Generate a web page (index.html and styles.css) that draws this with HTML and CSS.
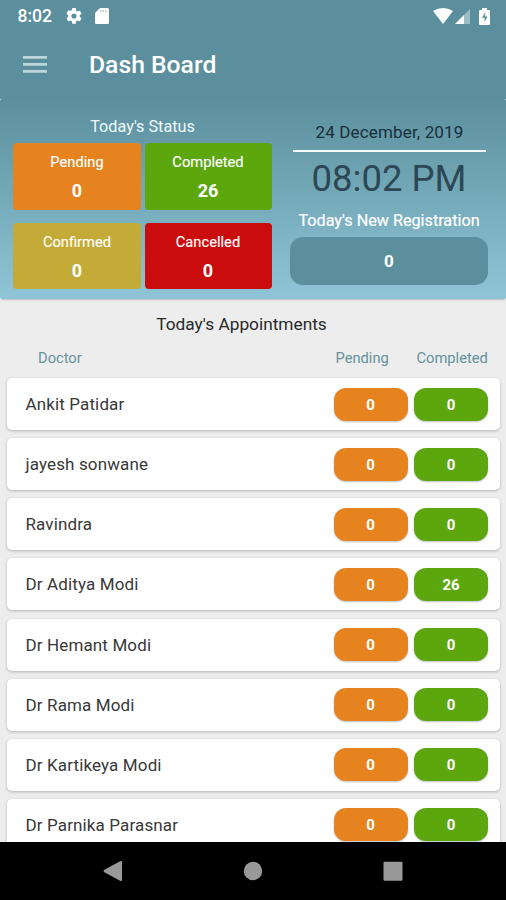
FILE: index.html
```html
<!DOCTYPE html>
<html lang="en">
<head>
<meta charset="utf-8">
<title>Dash Board</title>
<link rel="stylesheet" href="styles.css">
</head>
<body>
<div class="screen">
  <div class="statusbar">
    <span class="clock">8:02</span>
    <svg class="gear" viewBox="2 2 20 20"><path d="M19.14 12.94c.04-.3.06-.61.06-.94s-.02-.64-.07-.94l2.03-1.58a.49.49 0 0 0 .12-.61l-1.92-3.32a.49.49 0 0 0-.59-.22l-2.39.96a7 7 0 0 0-1.62-.94l-.36-2.54A.48.48 0 0 0 13.92 2h-3.84a.48.48 0 0 0-.47.41l-.36 2.54a7 7 0 0 0-1.62.94l-2.39-.96a.49.49 0 0 0-.59.22L2.74 8.87a.48.48 0 0 0 .12.61l2.03 1.58a6 6 0 0 0 0 1.88l-2.03 1.58a.49.49 0 0 0-.12.61l1.92 3.32c.12.22.37.29.59.22l2.39-.96a7 7 0 0 0 1.62.94l.36 2.54c.05.24.24.41.48.41h3.84c.24 0 .44-.17.47-.41l.36-2.54a7 7 0 0 0 1.62-.94l2.39.96c.22.08.47 0 .59-.22l1.92-3.32a.48.48 0 0 0-.12-.61zM12 15.200a3.200 3.200 0 1 1 0-6.400 3.200 3.200 0 0 1 0 6.400z"/></svg>
    <svg class="sd" viewBox="0 0 14 16"><path d="M5 0h7.500Q14 0 14 1.500v13q0 1.500-1.500 1.500h-11Q0 16 0 14.500V5z"/><path class="pins" d="M5 2h1.500v2H5zM7.500 2H9v2H7.500zM10 2h1.500v2H10z"/></svg>
    <div class="system">
      <svg class="wifi" viewBox="0 0 20 16"><path d="M0 3Q10-3 20 3L10 16z"/></svg>
      <svg class="signal" viewBox="0 0 16 16"><path class="faint" d="M16 0v16H0z"/><path d="M9.500 6.500V16H0z"/></svg>
      <svg class="battery" viewBox="0 0 11 17"><path d="M3 0h5v2h2q1 0 1 1v13q0 1-1 1H1q-1 0-1-1V3q0-1 1-1h2z"/><path class="bolt" d="M6.500 4L3 9.800h2.500v4.200l3-5.500H6z"/></svg>
    </div>
  </div>
  <header class="appbar">
    <svg class="menu" viewBox="0 0 24 17"><path d="M0 0h24v2.800H0zM0 7h24v2.800H0zM0 14h24v2.800H0z"/></svg>
    <h1>Dash Board</h1>
  </header>
  <section class="summary">
    <div class="status">
      <h2>Today's Status</h2>
      <div class="tiles">
        <div class="tile orange"><span>Pending</span><b>0</b></div>
        <div class="tile green"><span>Completed</span><b>26</b></div>
        <div class="tile gold"><span>Confirmed</span><b>0</b></div>
        <div class="tile red"><span>Cancelled</span><b>0</b></div>
      </div>
    </div>
    <div class="today">
      <div class="date">24 December, 2019</div>
      <div class="time">08:02 PM</div>
      <div class="reg-title">Today's New Registration</div>
      <div class="reg-count">0</div>
    </div>
  </section>
  <main class="appointments">
    <h2>Today's Appointments</h2>
    <div class="columns"><span class="doctor">Doctor</span><span class="pending">Pending</span><span class="completed">Completed</span></div>
    <div class="list">
      <div class="row"><span class="name">Ankit Patidar</span><b class="pill orange">0</b><b class="pill green">0</b></div>
      <div class="row"><span class="name">jayesh sonwane</span><b class="pill orange">0</b><b class="pill green">0</b></div>
      <div class="row"><span class="name">Ravindra</span><b class="pill orange">0</b><b class="pill green">0</b></div>
      <div class="row"><span class="name">Dr Aditya Modi</span><b class="pill orange">0</b><b class="pill green">26</b></div>
      <div class="row"><span class="name">Dr Hemant Modi</span><b class="pill orange">0</b><b class="pill green">0</b></div>
      <div class="row"><span class="name">Dr Rama Modi</span><b class="pill orange">0</b><b class="pill green">0</b></div>
      <div class="row"><span class="name">Dr Kartikeya Modi</span><b class="pill orange">0</b><b class="pill green">0</b></div>
      <div class="row"><span class="name">Dr Parnika Parasnar</span><b class="pill orange">0</b><b class="pill green">0</b></div>
    </div>
  </main>
  <nav class="navbar">
    <svg viewBox="0 0 20 22"><path d="M17.500 1Q19 .5 19 2v18q0 1.500-1.500 1L1 12q-1-1 0-2z"/></svg>
    <svg viewBox="0 0 20 22"><circle cx="10" cy="11" r="9.200"/></svg>
    <svg viewBox="0 0 20 22"><rect x=".5" y="1.700" width="19" height="19" rx="1.200"/></svg>
  </nav>
</div>
</body>
</html>
```

FILE: styles.css
```css
* { box-sizing: border-box; }
body { margin: 0; font-family: Roboto, sans-serif; }
h1, h2 { margin: 0; }
.screen { width: 506px; height: 900px; display: flex; flex-direction: column; overflow: hidden; background: #ededed; }
svg { display: block; flex: none; }

.statusbar { height: 32px; flex: none; display: flex; align-items: center; padding: 0 16px 0 17.500px; background: #5b8f9d; color: #fff; }
.statusbar svg { fill: #fff; }
.clock { font-size: 17.500px; font-weight: 500; width: 48.500px; line-height: 32px; }
.gear { width: 16px; height: 16px; margin-right: 12.500px; }
.sd { width: 14px; height: 16px; }
.statusbar .pins { fill: #b5cdd3; }
.system { margin-left: auto; display: flex; align-items: center; height: 31px; }
.wifi { width: 20px; height: 16px; margin-right: 2px; }
.signal { width: 15px; height: 15px; margin-right: 9px; }
.faint { opacity: .4; }
.battery { width: 11px; height: 17px; }
.statusbar .bolt { fill: #5b8f9d; }

.appbar { height: 67px; flex: none; display: flex; align-items: center; padding: 0 23px 2px; background: #5b8f9d; }
.menu { width: 24px; height: 17px; fill: #bfd7db; margin-right: 42px; }
.appbar h1 { font-size: 24.700px; font-weight: 500; line-height: 32px; color: #fff; white-space: nowrap; padding-top: 1px; }

.summary { height: 200px; flex: none; display: flex; padding: 17px 18px 0 13px; background: linear-gradient(#5b8f9d, #8fc5d6); border-radius: 2px; box-shadow: 0 2px 2px -1px rgba(0, 0, 0, .2); z-index: 1; }
.status { width: 259px; }
.status h2 { font-size: 16.200px; line-height: 22px; font-weight: 400; color: #eefaff; text-align: center; margin-bottom: 5px; }
.tiles { display: grid; grid-template-columns: 128px 127px; column-gap: 3.500px; row-gap: 13px; }
.tile { height: 66.500px; border-radius: 4px; color: #fff; text-align: center; padding-top: 9px; display: flex; flex-direction: column; }
.tile span { font-size: 14.700px; line-height: 20px; font-weight: 400; -webkit-text-stroke: .15px #fff; }
.tile b { font-size: 18px; line-height: 22px; margin-top: 8px; }
.orange { background: #e6831e; }
.green { background: #5ca70e; }
.gold { background: #c4aa36; }
.red { background: #cb0c0c; }
.today { flex: 1; margin-left: 18px; text-align: center; }
.date { margin: 5px 2px 0 3px; padding-bottom: 6px; line-height: 23px; border-bottom: 2.500px solid #f4fafb; font-size: 17px; letter-spacing: .15px; color: #172f3a; }
.time { font-size: 36.500px; line-height: 48px; margin-top: 3px; color: #2d4854; }
.reg-title { font-size: 16.200px; line-height: 22px; margin-top: 7px; color: #fff; -webkit-text-stroke: .2px #fff; white-space: nowrap; }
.reg-count { height: 48px; margin-top: 5px; border-radius: 13px; background: #5b8f9d; color: #fff; font-size: 17px; font-weight: 700; line-height: 49px; }

.appointments { height: 543px; flex: none; overflow: hidden; padding: 14px 6px 0 7px; }
.appointments h2 { font-size: 17.300px; line-height: 22px; font-weight: 400; color: #292929; text-align: center; margin-right: 24px; }
.columns { display: flex; margin-top: 12px; height: 22px; line-height: 22px; font-size: 14.700px; color: #63939e; }
.doctor { width: 328.500px; padding-left: 31px; }
.pending { width: 81px; }
.list { display: flex; flex-direction: column; gap: 8px; margin-top: 9.200px; }
.row { height: 52px; flex: none; display: flex; align-items: center; gap: 6.500px; padding: 0 12px 0 18.500px; margin-bottom: .1px; background: #fff; border-radius: 5px; box-shadow: 0 1px 3px rgba(0, 0, 0, .25); }
.name { flex: 1; font-size: 17px; letter-spacing: .13px; color: #383838; white-space: nowrap; }
.pill { width: 74px; height: 33px; border-radius: 12px; color: #fff; font-size: 15px; line-height: 34px; text-align: center; box-shadow: 0 1px 2px rgba(0, 0, 0, .25); }

.navbar { height: 58px; flex: none; z-index: 1; background: #000; display: flex; align-items: center; justify-content: center; gap: 120px; }
.navbar svg { width: 20px; height: 22px; fill: #999; }
```
